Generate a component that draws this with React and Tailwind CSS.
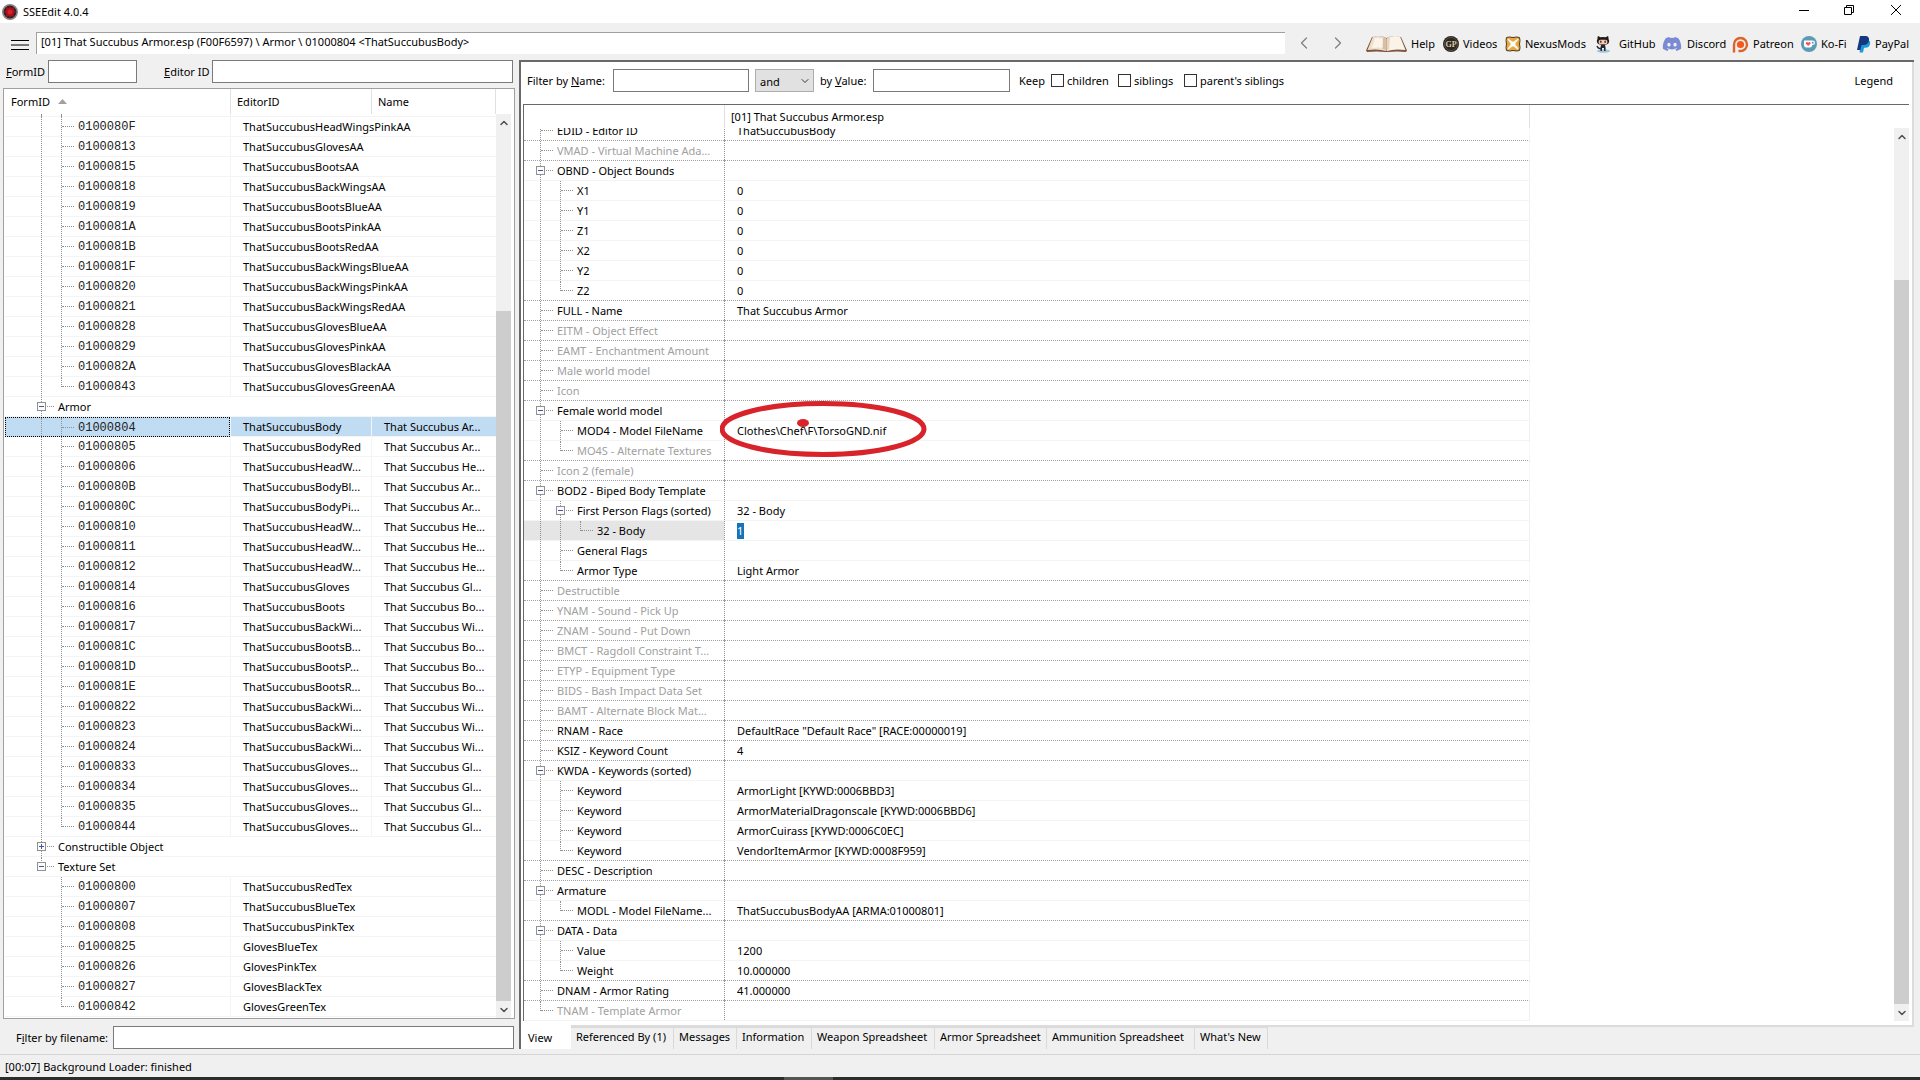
import React from 'react';
import { ChevronLeft, ChevronRight, ChevronDown, ChevronUp } from 'lucide-react';
import { FaDiscord } from 'react-icons/fa';

// guides: one letter per tree level, "|" runs through, "T" branches, "L" ends the branch
const records = [
  ['|T', '0100080F', 'ThatSuccubusHeadWingsPinkAA'],
  ['|T', '01000813', 'ThatSuccubusGlovesAA'],
  ['|T', '01000815', 'ThatSuccubusBootsAA'],
  ['|T', '01000818', 'ThatSuccubusBackWingsAA'],
  ['|T', '01000819', 'ThatSuccubusBootsBlueAA'],
  ['|T', '0100081A', 'ThatSuccubusBootsPinkAA'],
  ['|T', '0100081B', 'ThatSuccubusBootsRedAA'],
  ['|T', '0100081F', 'ThatSuccubusBackWingsBlueAA'],
  ['|T', '01000820', 'ThatSuccubusBackWingsPinkAA'],
  ['|T', '01000821', 'ThatSuccubusBackWingsRedAA'],
  ['|T', '01000828', 'ThatSuccubusGlovesBlueAA'],
  ['|T', '01000829', 'ThatSuccubusGlovesPinkAA'],
  ['|T', '0100082A', 'ThatSuccubusGlovesBlackAA'],
  ['|L', '01000843', 'ThatSuccubusGlovesGreenAA'],
  ['T', 'Armor', '', '', '-'],
  ['|T', '01000804', 'ThatSuccubusBody', 'That Succubus Ar...'],
  ['|T', '01000805', 'ThatSuccubusBodyRed', 'That Succubus Ar...'],
  ['|T', '01000806', 'ThatSuccubusHeadW...', 'That Succubus He...'],
  ['|T', '0100080B', 'ThatSuccubusBodyBl...', 'That Succubus Ar...'],
  ['|T', '0100080C', 'ThatSuccubusBodyPi...', 'That Succubus Ar...'],
  ['|T', '01000810', 'ThatSuccubusHeadW...', 'That Succubus He...'],
  ['|T', '01000811', 'ThatSuccubusHeadW...', 'That Succubus He...'],
  ['|T', '01000812', 'ThatSuccubusHeadW...', 'That Succubus He...'],
  ['|T', '01000814', 'ThatSuccubusGloves', 'That Succubus Gl...'],
  ['|T', '01000816', 'ThatSuccubusBoots', 'That Succubus Bo...'],
  ['|T', '01000817', 'ThatSuccubusBackWi...', 'That Succubus Wi...'],
  ['|T', '0100081C', 'ThatSuccubusBootsB...', 'That Succubus Bo...'],
  ['|T', '0100081D', 'ThatSuccubusBootsP...', 'That Succubus Bo...'],
  ['|T', '0100081E', 'ThatSuccubusBootsR...', 'That Succubus Bo...'],
  ['|T', '01000822', 'ThatSuccubusBackWi...', 'That Succubus Wi...'],
  ['|T', '01000823', 'ThatSuccubusBackWi...', 'That Succubus Wi...'],
  ['|T', '01000824', 'ThatSuccubusBackWi...', 'That Succubus Wi...'],
  ['|T', '01000833', 'ThatSuccubusGloves...', 'That Succubus Gl...'],
  ['|T', '01000834', 'ThatSuccubusGloves...', 'That Succubus Gl...'],
  ['|T', '01000835', 'ThatSuccubusGloves...', 'That Succubus Gl...'],
  ['|L', '01000844', 'ThatSuccubusGloves...', 'That Succubus Gl...'],
  ['T', 'Constructible Object', '', '', '+'],
  ['L', 'Texture Set', '', '', '-'],
  [' T', '01000800', 'ThatSuccubusRedTex'],
  [' T', '01000807', 'ThatSuccubusBlueTex'],
  [' T', '01000808', 'ThatSuccubusPinkTex'],
  [' T', '01000825', 'GlovesBlueTex'],
  [' T', '01000826', 'GlovesPinkTex'],
  [' T', '01000827', 'GlovesBlackTex'],
  [' L', '01000842', 'GlovesGreenTex'],
];

const elements = [
  { g: 'T', label: 'EDID - Editor ID', value: 'ThatSuccubusBody' },
  { g: 'T', label: 'VMAD - Virtual Machine Ada...', off: true },
  { g: 'T', label: 'OBND - Object Bounds', toggle: '-' },
  { g: '|T', label: 'X1', value: '0' },
  { g: '|T', label: 'Y1', value: '0' },
  { g: '|T', label: 'Z1', value: '0' },
  { g: '|T', label: 'X2', value: '0' },
  { g: '|T', label: 'Y2', value: '0' },
  { g: '|L', label: 'Z2', value: '0' },
  { g: 'T', label: 'FULL - Name', value: 'That Succubus Armor' },
  { g: 'T', label: 'EITM - Object Effect', off: true },
  { g: 'T', label: 'EAMT - Enchantment Amount', off: true },
  { g: 'T', label: 'Male world model', off: true },
  { g: 'T', label: 'Icon', off: true },
  { g: 'T', label: 'Female world model', toggle: '-' },
  { g: '|T', label: 'MOD4 - Model FileName', value: 'Clothes\\Chef\\F\\TorsoGND.nif', marked: true },
  { g: '|L', label: 'MO4S - Alternate Textures', off: true },
  { g: 'T', label: 'Icon 2 (female)', off: true },
  { g: 'T', label: 'BOD2 - Biped Body Template', toggle: '-' },
  { g: '|T', label: 'First Person Flags (sorted)', value: '32 - Body', toggle: '-' },
  { g: '||L', label: '32 - Body', value: '1', editing: true },
  { g: '|T', label: 'General Flags' },
  { g: '|L', label: 'Armor Type', value: 'Light Armor' },
  { g: 'T', label: 'Destructible', off: true },
  { g: 'T', label: 'YNAM - Sound - Pick Up', off: true },
  { g: 'T', label: 'ZNAM - Sound - Put Down', off: true },
  { g: 'T', label: 'BMCT - Ragdoll Constraint T...', off: true },
  { g: 'T', label: 'ETYP - Equipment Type', off: true },
  { g: 'T', label: 'BIDS - Bash Impact Data Set', off: true },
  { g: 'T', label: 'BAMT - Alternate Block Mat...', off: true },
  { g: 'T', label: 'RNAM - Race', value: 'DefaultRace "Default Race" [RACE:00000019]' },
  { g: 'T', label: 'KSIZ - Keyword Count', value: '4' },
  { g: 'T', label: 'KWDA - Keywords (sorted)', toggle: '-' },
  { g: '|T', label: 'Keyword', value: 'ArmorLight [KYWD:0006BBD3]' },
  { g: '|T', label: 'Keyword', value: 'ArmorMaterialDragonscale [KYWD:0006BBD6]' },
  { g: '|T', label: 'Keyword', value: 'ArmorCuirass [KYWD:0006C0EC]' },
  { g: '|L', label: 'Keyword', value: 'VendorItemArmor [KYWD:0008F959]' },
  { g: 'T', label: 'DESC - Description' },
  { g: 'T', label: 'Armature', toggle: '-' },
  { g: '|L', label: 'MODL - Model FileName...', value: 'ThatSuccubusBodyAA [ARMA:01000801]' },
  { g: 'T', label: 'DATA - Data', toggle: '-' },
  { g: '|T', label: 'Value', value: '1200' },
  { g: '|L', label: 'Weight', value: '10.000000' },
  { g: 'T', label: 'DNAM - Armor Rating', value: '41.000000' },
  { g: 'L', label: 'TNAM - Template Armor', off: true },
];

const BookIcon = () => (
  <svg width="43" height="18" viewBox="0 0 43 18">
    <path d="M7 2 1 15.500 2 17q10-1 18 0h3q9-1 18 0l1-1.500L36 2Q26 0 21.500 3 17 0 7 2Z" fill="#7d5540" />
    <path d="M8 1.500 2.500 15q11-1.500 18.500 1V3Q16 0 8 1.500Z" fill="#efdfcd" />
    <path d="M10 3 7 13q7-1 11 0V4q-3-1.500-8-1Z" fill="#fbf4ea" />
    <path d="M35 1.500 40.500 15q-11-1.500-18.500 1V3Q27 0 35 1.500Z" fill="#fbf3e8" />
    <path d="M18 2.200q3 0 3.500 1.600v12q-2-1.500-4-1.800Z" fill="#d8bfa3" />
    <path d="M25 2.200q-3 0-3.500 1.600v12q1-1 2.500-1.500Z" fill="#e6d5c0" />
  </svg>
);

const VideosIcon = () => (
  <svg width="16" height="16" viewBox="0 0 16 16">
    <circle cx="8" cy="8" r="8" fill="#2b2621" />
    <circle cx="8" cy="8" r="6.500" fill="none" stroke="#5a5044" />
    <text x="8" y="11" textAnchor="middle" fontSize="8" fontWeight="bold" fontFamily="Liberation Serif, serif" fill="#d8c9a6">GP</text>
  </svg>
);

const NexusIcon = () => (
  <svg width="16" height="16" viewBox="0 0 16 16">
    <path d="M1.500 1.500Q4 .5 8 1.500q4-1 6.500 0Q15.500 4 14.500 8q1 4 0 6.500Q12 15.500 8 14.500q-4 1-6.500 0Q.5 12 1.500 8q-1-4 0-6.500Z" fill="#e9a640" stroke="#4a3a22" />
    <path d="M3 2.500 8 6l5-3.500.5 1L10 8l3.500 4.500-1 1L8 10l-4.500 3.500-1-1L6 8 2.500 3.500Z" fill="#fff8e6" />
    <path d="m8 5 1 2 2 1-2 1-1 2-1-2-2-1 2-1Z" fill="#fff" />
  </svg>
);

const OctocatIcon = () => (
  <svg width="18" height="18" viewBox="0 0 18 18">
    <ellipse cx="9.500" cy="16" rx="6.500" ry="1.800" fill="#9cc6dc" />
    <path d="M4 1l2.500 1.200q2.500-.6 5 0L14 1q.8 1.500.5 3 1 1.500.5 3.300Q14 10 9 10T3 7.300Q2.500 5.500 3.500 4 3.200 2.500 4 1Z" fill="#1f1b1c" />
    <rect x="4.500" y="4.800" width="9" height="4.400" rx="2.200" fill="#f4cbb2" />
    <ellipse cx="6.800" cy="6.800" rx=".9" ry="1.300" fill="#6b3a2e" />
    <ellipse cx="11.200" cy="6.800" rx=".9" ry="1.300" fill="#6b3a2e" />
    <path d="M7 10h4q.8 2 .5 6H10v-3H8v3H6.500Q6.200 12 7 10Z" fill="#26282c" />
    <path d="M7 13.500q-3 .5-4-2.500" fill="none" stroke="#26282c" strokeWidth="1.300" />
  </svg>
);

const PatreonIcon = () => (
  <svg width="17" height="17" viewBox="0 0 17 17">
    <path d="M2 16.500V8.500a6.500 6.500 0 1 1 6.500 6.500H6.500" fill="none" stroke="#d9652b" strokeWidth="2.400" />
    <circle cx="8.500" cy="8.500" r="3.600" fill="#f4581c" />
  </svg>
);

const KofiIcon = () => (
  <svg width="16" height="16" viewBox="0 0 16 16">
    <circle cx="8" cy="8" r="8" fill="#5b9bb5" />
    <path d="M3 4.500h8.500q2.500 0 2.500 2.300T11.300 9Q11 11.500 9 11.500H5.200Q3 11.500 3 9Z" fill="#fff" />
    <circle cx="11.800" cy="6.800" r="1" fill="#5b9bb5" />
    <path d="M7.200 10 4.900 7.700q-.5-1.500.8-1.800 1 0 1.500.8.500-.8 1.500-.8 1.300.3.800 1.800Z" fill="#f0525a" />
  </svg>
);

const PaypalIcon = () => (
  <svg width="14" height="17" viewBox="0 0 14 17">
    <path d="M5 4h6q2.800 1 2 4.200-.9 3.600-4.800 3.600H7L6 16.500H2.500Z" fill="#1a9bd8" />
    <path d="M3 0h5.500Q12.500.2 12 4.200 11.300 9 6.500 9H4.500l-1 5H0Z" fill="#15387e" />
  </svg>
);

const AppIcon = () => (
  <svg width="16" height="16" viewBox="0 0 16 16">
    <circle cx="8" cy="8" r="7.200" fill="#2c2427" stroke="#8b8688" strokeWidth="1.600" />
    <path d="m8 2 1.200 2L12 3l-.4 2.600L14 8l-2.400 1.600L12 13l-2.800-1L8 14l-1.200-2L4 13l.4-3.400L2 8l2.400-2.400L4 3l2.800 1Z" fill="#a8101b" />
    <circle cx="8" cy="8" r="2.500" fill="#d8202b" />
  </svg>
);

const links = [
  { label: 'Help', icon: <BookIcon />, box: 'w-[78px]', slot: 'w-[46px]' },
  { label: 'Videos', icon: <VideosIcon />, box: 'w-[62px]', slot: 'w-5' },
  { label: 'NexusMods', icon: <NexusIcon />, box: 'w-[89px]', slot: 'w-5' },
  { label: 'GitHub', icon: <OctocatIcon />, box: 'w-[68px]', slot: 'w-[25px]' },
  { label: 'Discord', icon: <FaDiscord size={20} color="#7a8bd4" />, box: 'w-[70px]', slot: 'w-[25px]' },
  { label: 'Patreon', icon: <PatreonIcon />, box: 'w-[69px]', slot: 'w-[21px]' },
  { label: 'Ko-Fi', icon: <KofiIcon />, box: 'w-[56px]', slot: 'w-5' },
  { label: 'PayPal', icon: <PaypalIcon />, box: 'w-[55px]', slot: 'w-[18px]' },
];

const tabs = [
  ['Referenced By (1)', 'w-[103px]'],
  ['Messages', 'w-[63px]'],
  ['Information', 'w-[75px]'],
  ['Weapon Spreadsheet', 'w-[123px]'],
  ['Armor Spreadsheet', 'w-[112px]'],
  ['Ammunition Spreadsheet', 'w-[148px]'],
  ["What's New", 'w-[73px]'],
];

const field = 'h-[23px] border border-[#7a7a7a] bg-white px-1 outline-none';

function Toggle({ sign }) {
  return (
    <button aria-label={sign === '-' ? 'Collapse' : 'Expand'} className="absolute -left-1 top-[5px] z-10 h-[9px] w-[9px]">
      <svg width="9" height="9" viewBox="0 0 9 9" className="block">
        <rect x=".5" y=".5" width="8" height="8" fill="#fafafa" stroke="#919191" />
        <path d={sign === '-' ? 'M2 4.500h5' : 'M2 4.500h5M4.500 2v5'} stroke="#3f57a5" />
      </svg>
    </button>
  );
}

function Guides({ guides, toggle }) {
  const last = guides.length - 1;
  return guides.split('').map((g, i) => (
    <span key={i} className={i === last ? 'relative w-[17px] shrink-0' : 'relative w-5 shrink-0'}>
      {g !== ' ' && (
        <span className={g === 'L' ? 'block h-[10px] border-l border-dotted border-[#909090]' : 'block h-full border-l border-dotted border-[#909090]'}>
          {g !== '|' && <span className="block h-[10px] w-3 border-b border-dotted border-[#909090]" />}
        </span>
      )}
      {i === last && toggle && <Toggle sign={toggle} />}
    </span>
  ));
}

function ScrollBar({ thumb }) {
  return (
    <div className="flex w-[15px] shrink-0 flex-col bg-[#f0f0f0]">
      <button aria-label="Scroll up" className="flex h-[17px] items-center justify-center text-[#505050]">
        <ChevronUp size={12} strokeWidth={3} />
      </button>
      <div className={thumb} />
      <div className="flex-1 bg-[#cdcdcd]" />
      <button aria-label="Scroll down" className="flex h-[17px] items-center justify-center text-[#505050]">
        <ChevronDown size={12} strokeWidth={3} />
      </button>
    </div>
  );
}

function RecordRow({ row }) {
  const [guides, id, editor, name, toggle] = row;
  const selected = id === '01000804';
  const line = 'border-b border-[#f4f4f4] p-0';
  return (
    <tr className={selected ? 'h-5 bg-[#c0dcf3]' : 'h-5'}>
      <td colSpan={toggle ? 3 : 1} className={selected ? 'border border-dotted border-black p-0' : line}>
        <div className={selected ? 'flex h-[18px] pl-[35px]' : 'flex h-[19px] pl-9'}>
          <Guides guides={guides} toggle={toggle} />
          <span className={toggle ? 'leading-[19px]' : 'font-["Liberation_Mono",monospace] text-[12px] leading-5 text-[#222]'}>{id}</span>
        </div>
      </td>
      {!toggle && (
        <td colSpan={name ? 1 : 2} className="border-b border-l border-[#f4f4f4] p-0 pl-3">{editor}</td>
      )}
      {name && <td className="border-b border-l border-[#f4f4f4] p-0 pl-3">{name}</td>}
    </tr>
  );
}

function ElementRow({ row, next }) {
  const line = next && next.g.length === 1 ? 'border-b border-dotted border-b-[#a0a0a0]' : 'border-b border-b-[#f4f4f4]';
  return (
    <tr className="h-5">
      <th scope="row" className={`${line} p-0 text-left font-normal ${row.editing ? 'bg-[#e5e5e5]' : ''}`}>
        <div className={`flex h-[19px] pl-4 ${row.off ? 'text-[#a0a0a0]' : ''}`}>
          <Guides guides={row.g} toggle={row.toggle} />
          <span className="leading-[19px]">{row.label}</span>
        </div>
      </th>
      <td className={`${line} relative border-r border-r-[#f0f0f0] p-0`}>
        <div className="flex h-[19px] items-center border-l border-dotted border-[#909090] pl-3">
          {row.editing ? (
            <input aria-label="32 - Body" defaultValue={row.value} className="h-4 w-[7px] bg-[#1874b8] p-0 text-white outline-none" />
          ) : row.value}
        </div>
        {row.marked && (
          <svg width="210" height="58" viewBox="0 0 210 58" className="pointer-events-none absolute -left-1 -top-5 z-10">
            <ellipse cx="103" cy="28" rx="101" ry="25.500" fill="none" stroke="#d8232a" strokeWidth="5" />
            <ellipse cx="83" cy="22" rx="6" ry="4" fill="#d8232a" />
          </svg>
        )}
      </td>
    </tr>
  );
}

function RecordPanel() {
  return (
    <section className="flex w-[519px] shrink-0 flex-col pl-[3px]">
      <div className="flex items-center">
        <label htmlFor="formid" className="w-[45px] pl-[3px]"><u>F</u>ormID</label>
        <input id="formid" className={`${field} w-[89px]`} />
        <label htmlFor="editorid" className="w-[75px] pl-[27px]"><u>E</u>ditor ID</label>
        <input id="editorid" className={`${field} w-[301px]`} />
      </div>

      <div className="mt-[5px] flex w-[512px] flex-1 flex-col border border-[#a0a0a0] bg-white pl-px">
        <div className="flex h-[25px] items-stretch">
          <button className="flex w-[225px] items-center gap-2 pl-[6px]">
            FormID
            <svg width="9" height="5" viewBox="0 0 9 5"><path d="M4.500 0 9 5H0Z" fill="#a0a0a0" /></svg>
          </button>
          <button className="w-[141px] border-l border-[#e0e0e0] pl-[6px] text-left">EditorID</button>
          <button className="w-[125px] border-x border-[#e0e0e0] pl-[6px] text-left">Name</button>
        </div>
        <div className="flex flex-1">
          <table className="w-[491px] table-fixed border-separate border-spacing-0 self-start whitespace-nowrap">
            <colgroup>
              <col className="w-[225px]" />
              <col className="w-[141px]" />
              <col className="w-[125px]" />
            </colgroup>
            <tbody>
              <tr>
                <td className="border-b border-[#f4f4f4] p-0">
                  <div className="flex h-[2px] pl-9"><Guides guides="||" /></div>
                </td>
                <td colSpan={2} className="border-b border-l border-[#f4f4f4] p-0" />
              </tr>
              {records.map((row) => <RecordRow key={row[1]} row={row} />)}
            </tbody>
          </table>
          <ScrollBar thumb="h-[180px]" />
        </div>
      </div>

      <div className="mt-[7px] flex items-center">
        <label htmlFor="filename" className="w-[110px] pl-[13px]">F<u>i</u>lter by filename:</label>
        <input id="filename" className={`${field} w-[401px]`} />
      </div>
    </section>
  );
}

function Check({ label, box }) {
  return (
    <label className={`flex items-center gap-[3px] ${box}`}>
      <input type="checkbox" className="h-[13px] w-[13px] appearance-none border border-[#333] bg-white" />
      {label}
    </label>
  );
}

function ViewPanel() {
  return (
    <section className="mr-[6px] flex min-w-0 flex-1 flex-col border-l-2 border-t-2 border-[#696969]">
      <div className="flex flex-1 flex-col border-b-2 border-r-2 border-[#dcdcdc] bg-white pb-1 pl-[2px] pr-[3px]">
        <div className="flex h-[42px] items-start pt-[7px] leading-[23px]">
          <label htmlFor="byname" className="w-[90px] pl-1">Filter by <u>N</u>ame:</label>
          <input id="byname" className={`${field} w-[136px]`} />
          <div className="relative ml-[6px]">
            <select aria-label="Filter operator" className="h-[23px] w-[59px] appearance-none border border-[#adadad] bg-[#e1e1e1] pl-1">
              <option>and</option>
            </select>
            <ChevronDown size={12} strokeWidth={1.5} className="pointer-events-none absolute right-[3px] top-[6px]" />
          </div>
          <label htmlFor="byvalue" className="w-[59px] pl-[6px]">by <u>V</u>alue:</label>
          <input id="byvalue" className={`${field} w-[137px]`} />
          <span className="w-[41px] pl-[9px]">Keep</span>
          <Check label="children" box="w-[67px]" />
          <Check label="siblings" box="w-[66px]" />
          <Check label="parent's siblings" box="w-[110px]" />
          <a href="#legend" className="ml-auto pr-4">Legend</a>
        </div>

        <div className="flex flex-1 flex-col border-l border-t border-[#696969]">
          <div className="flex h-[23px]">
            <div className="w-[200px]" />
            <button className="w-[806px] border-x border-[#e0e0e0] pl-[6px] text-left">[01] That Succubus Armor.esp</button>
          </div>
          <div className="flex flex-1">
            <div className="min-w-0 flex-1 overflow-hidden">
              {/* list is scrolled a few pixels into the first row */}
              <table className="-mt-[7px] w-[1006px] table-fixed border-separate border-spacing-0 whitespace-nowrap">
                <colgroup>
                  <col className="w-[200px]" />
                  <col className="w-[806px]" />
                </colgroup>
                <tbody>
                  {elements.map((row, i) => <ElementRow key={i} row={row} next={elements[i + 1]} />)}
                </tbody>
              </table>
            </div>
            <ScrollBar thumb="h-[135px]" />
          </div>
        </div>
      </div>

      <nav className="flex h-[22px]">
        <button className="-mt-1 w-[50px] bg-white pl-[7px] pt-1 text-left">View</button>
        {tabs.map(([label, width]) => (
          <button key={label} className={`${width} border-r border-t border-[#d9d9d9] pb-1 pl-[5px] text-left`}>{label}</button>
        ))}
      </nav>
    </section>
  );
}

export default function App() {
  return (
    <div className="flex min-h-screen flex-col bg-[#f0f0f0] font-['Noto_Sans',sans-serif] text-[11px] leading-4 text-black">
      <header className="flex h-[23px] items-center bg-white pl-[2px]">
        <AppIcon />
        <h1 className="pl-[5px]">SSEEdit 4.0.4</h1>
        <div className="ml-auto flex pb-1">
          <button aria-label="Minimize" className="flex w-[45px] justify-center">
            <svg width="10" height="10" viewBox="0 0 10 10"><path d="M0 5.500h10" stroke="#000" /></svg>
          </button>
          <button aria-label="Restore" className="flex w-[45px] justify-center">
            <svg width="10" height="10" viewBox="0 0 10 10" fill="none" stroke="#000"><path d="M.5 2.500h7v7h-7ZM2.500 2.500v-2h7v7h-2" /></svg>
          </button>
          <button aria-label="Close" className="flex w-[49px] justify-center">
            <svg width="10" height="10" viewBox="0 0 10 10" stroke="#000"><path d="M0 0l10 10M10 0 0 10" /></svg>
          </button>
        </div>
      </header>

      <div className="flex h-[37px] items-start pt-[9px]">
        <button aria-label="Menu" className="flex h-[22px] w-9 items-center justify-center pl-1 pt-1">
          <svg width="18" height="10" viewBox="0 0 18 10"><path d="M0 .5h18M0 5h18M0 9.500h18" stroke="#000" /></svg>
        </button>
        <input
          aria-label="Path"
          readOnly
          defaultValue="[01] That Succubus Armor.esp (F00F6597) \ Armor \ 01000804 <ThatSuccubusBody>"
          className="h-[22px] min-w-0 flex-1 border-l border-t border-[#a0a0a0] bg-white pb-1 pl-1 outline-none"
        />
        <button aria-label="Back" className="ml-[6px] flex h-[22px] w-[25px] items-center justify-center text-[#808080]"><ChevronLeft size={20} strokeWidth={1.5} /></button>
        <button aria-label="Forward" className="ml-[9px] mr-[15px] flex h-[22px] w-[25px] items-center justify-center text-[#808080]"><ChevronRight size={20} strokeWidth={1.5} /></button>
        <nav className="flex pr-2">
          {links.map((link) => (
            <a key={link.label} href={`#${link.label}`} className={`flex h-6 items-center ${link.box}`}>
              <span className={`flex shrink-0 ${link.slot}`}>{link.icon}</span>
              {link.label}
            </a>
          ))}
        </nav>
      </div>

      <main className="flex flex-1">
        <RecordPanel />
        <ViewPanel />
      </main>

      <footer className="mt-[5px] flex h-[23px] items-center border-t border-[#d4d4d4] pl-[5px] pt-[2px]">
        [00:07] Background Loader: finished
      </footer>
      <div className="h-[3px] bg-[#2e2c2d] pl-[784px]">
        <div className="h-full w-[49px] bg-[#555]" />
      </div>
    </div>
  );
}
